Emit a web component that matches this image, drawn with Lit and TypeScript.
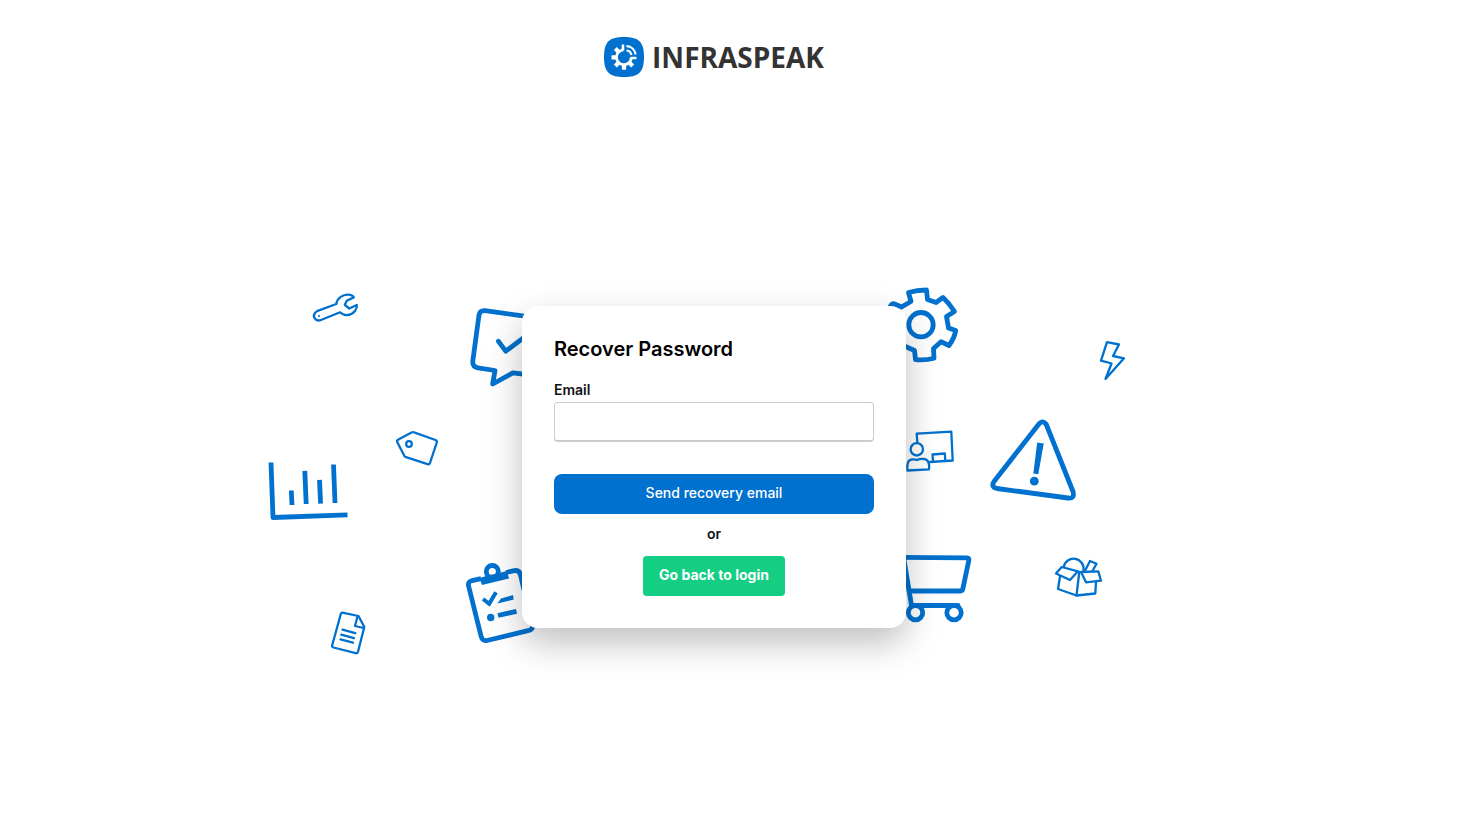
import { LitElement, html, css, svg } from "lit";
import { customElement } from "lit/decorators.js";

const wrench = svg`
  <g class="thin">
    <path d="M317 311.2 L336.3 304 C337 298 343 294 349 294.6 Q353 295.2 353.8 297.4 L346.8 300.800 L344.800 304.800 L349.3 308.5 L356.8 305 C357.5 309 353.5 314.5 348 315 Q343 315.5 340 312.3 L321 320 C316 322 312 317 315 313 Q315.8 311.7 317 311.2 Z"/>
    <circle class="fill" cx="319" cy="316" r="1.1"/>
  </g>`;

const chat = svg`
  <g class="thick">
    <path d="M530 316.8 L485 310.7 Q480 310.2 479 315 L472.8 361 Q472.3 367 478 367.8 L495 370.5 L492.7 384 L513 372.8 L530 375"/>
    <path d="M498.5 341.3 L505.7 351.2 L526 336"/>
  </g>`;

const tag = svg`
  <g class="thin">
    <path d="M398 439.8 L411.5 432.5 Q412.7 431.8 414 432.3 L435.5 440 Q437.2 440.8 436.8 442.3 L430 463 Q429.2 464.8 427.5 464.2 L406 457.2 Q405 457 404.3 455.8 L397.2 442 Q396.5 440.6 398 439.8 Z"/>
    <circle cx="409" cy="444" r="2.8"/>
  </g>`;

const chart = svg`
  <g class="thick">
    <path class="butt" d="M271 462.5 L273 517.5 L347.5 514.8"/>
    <path class="butt" d="M291.3 490.5 L292 505 M304.8 470.8 L306.2 504 M319.5 479.8 L320.6 503.7 M333.5 464.5 L335 503"/>
  </g>`;

const sheet = svg`
  <g class="thin">
    <path d="M343.5 612.8 L358.5 616 L364.3 627 L358 651.8 Q357.5 653.6 355.7 653.2 L333.5 647.5 Q331.8 647 332.2 645.2 L340.8 614 Q341.3 612.3 343.5 612.8 Z"/>
    <path d="M357.5 616.5 L355 626 L363.8 628"/>
    <path d="M342.5 629.7 L355.3 633.2 M341.3 634.6 L354 638.1 M340.5 639.3 L353 642.7"/>
  </g>`;

const clipboard = svg`
  <g class="thick">
    <path class="butt" d="M481 578.7 L472 580.7 Q467.5 581.8 468.6 586 L481 636 Q482.3 641.5 487 640.5 L528 630.7 Q534 629.5 532 624 L520.5 575 Q519.5 569.7 514.5 570.6 L506 572.5"/>
    <circle cx="492.3" cy="571.5" r="6"/>
    <path class="solid" d="M479.5 578 L488 575.5 L497 573.5 L507 571 L509 578.5 L482 585 Z"/>
    <path class="check" d="M483 599 L489.2 603.8 L496 592.3"/>
    <path class="solid" d="M497.3 603.5 L501 598.5 L513 595 L513.7 599.5 Z"/>
    <circle class="solid" cx="490.7" cy="617.5" r="3.7"/>
    <path class="butt" d="M498 615.5 L516.5 611.3"/>
  </g>`;

const gear = svg`
  <g class="thick">
    <path d="M890 307 Q891.5 303.5 894 303.8 L901.5 307 L911 301.5 L908.5 292.5 Q917 290 926.5 290 L927.5 299.5 L936 302.5 L943 297.5 Q949 303 954.5 311.5 L946.5 316.5 L948.5 328 L955.7 330.5 Q954.5 338 949 345.5 L941 341.8 L933.5 348.5 L934 358.3 Q926 360.5 915.5 359.7 L914.5 350.5 L902 345"/>
    <circle cx="921" cy="324.7" r="12.2"/>
  </g>`;

const bolt = svg`
  <path class="thin" d="M1107 342.2 L1119 344.5 L1113 356 L1124 358.3 L1105.5 379 L1111.5 363.5 L1101 360.7 Z"/>`;

const trainer = svg`
  <g class="thin">
    <path d="M917.3 442.5 L916.7 433.7 L951.3 431.7 L952.7 460.5 L930 462"/>
    <path d="M933 461.5 L932.5 454.5 L944.8 453.5 L945.3 460.5"/>
    <circle cx="916.8" cy="449.3" r="6.2"/>
    <path d="M907.5 470.5 Q906.3 461 911 459.7 Q914 459 917 460 Q920 458.3 924.5 459 Q930 460 929 469.3 Z"/>
  </g>`;

const warning = svg`
  <g class="thick">
    <path d="M1038.5 424.5 Q1042.5 419.3 1046.3 424.5 L1073 491.5 Q1075 499 1068 498 L997 488.5 Q990.5 487 994 481.5 Z"/>
    <path class="solid" d="M1037.2 442.4 L1043.7 443.6 L1038.3 474.2 L1033.3 473.4 Z"/>
    <circle class="solid" cx="1034.3" cy="481.2" r="4.4"/>
  </g>`;

const cart = svg`
  <g class="thick">
    <path d="M900 557.3 L967 557.8 Q969.5 558 968.8 560.5 L962.8 589 Q962.5 591 960.5 591 L909 591"/>
    <path d="M904 560 L911.5 605.5 L958 605.5"/>
    <circle cx="915.5" cy="612.7" r="7.2"/>
    <circle cx="954" cy="612.7" r="7.2"/>
  </g>`;

const box = svg`
  <g class="thin">
    <path d="M1061.7 567 L1078 571.3 L1070 580 L1056 573.5 Z"/>
    <path d="M1081 572 L1098.3 571.3 L1101 580.7 L1086 582.3 Z"/>
    <path d="M1060 576.5 L1058 589 L1076.5 595.5 L1095.3 593.5 L1096 581.7"/>
    <path d="M1079.3 572 L1076.5 595.5"/>
    <path d="M1063.7 567 A10 10 0 0 1 1083.5 570.500"/>
    <path d="M1085 570.7 L1090 561 L1096.5 563.8 L1092.5 571"/>
  </g>`;

@customElement("login-backdrop")
export class LoginBackdrop extends LitElement {
  static styles = css`
    :host {
      display: block;
    }
    .art {
      display: block;
      width: 900px;
      height: 380px;
    }
    .thin,
    .thick {
      fill: none;
      stroke: #0071ce;
      stroke-width: 2.3;
      stroke-linecap: round;
      stroke-linejoin: round;
    }
    .thick {
      stroke-width: 4.8;
    }
    .butt {
      stroke-linecap: butt;
    }
    .check {
      stroke-width: 4;
      stroke-linecap: butt;
      stroke-linejoin: miter;
    }
    .fill,
    .solid {
      fill: #0071ce;
      stroke: none;
    }
  `;

  render() {
    return html`
      <svg class="art" viewBox="264 277 900 380" aria-hidden="true">
        ${wrench}${chat}${tag}${chart}${sheet}${clipboard}
        ${gear}${bolt}${trainer}${warning}${cart}${box}
      </svg>
    `;
  }
}

@customElement("brand-logo")
export class BrandLogo extends LitElement {
  static styles = css`
    :host {
      display: flex;
      align-items: center;
      gap: 8px;
    }
    .mark {
      width: 40px;
      height: 40px;
    }
    .name {
      font: 700 28px/40px "Open Sans", sans-serif;
      color: #333;
    }
  `;

  render() {
    return html`
      <svg class="mark" viewBox="0 0 40 40" aria-hidden="true">
        <path fill="#0071ce" d="M20 0 C34 0 40 4 40 20 C40 36 34 40 20 40 C6 40 0 36 0 20 C0 4 6 0 20 0 Z"/>
        <g fill="none" stroke="#fff">
          <path stroke-width="2.8" d="M19.2 12.9 A7.4 7.4 0 1 0 27.3 20.3"/>
          <path stroke-width="4.2" d="M7.5 20.3 H12.5 M20 27.5 V32.7 M11.3 11.6 L14.8 15.1 M11.3 29 L14.8 25.5 M28.7 29 L25.2 25.5"/>
          <path stroke-width="2.6" d="M19 7.5 V13.5 M27 21 H32.5"/>
          <path stroke-width="2.2" d="M22.5 9.2 C27.5 9.5 31 13 31.5 17.5 M22.5 13.5 C25.3 13.8 27 15.5 27.5 18"/>
        </g>
      </svg>
      <span class="name">INFRASPEAK</span>
    `;
  }
}

@customElement("app-root")
export class AppRoot extends LitElement {
  static styles = css`
    :host {
      display: block;
      font-family: Inter, sans-serif;
      font-size: 14px;
      color: #111;
    }
    .page {
      display: flex;
      flex-direction: column;
      box-sizing: border-box;
      min-height: 100vh;
      padding-right: 51px;
      background: #fff;
      overflow: hidden;
    }
    .header {
      display: flex;
      justify-content: center;
      padding: 37px 0 17px;
    }
    .stage {
      display: grid;
      flex: 1;
      place-items: center;
      place-content: center;
    }
    .backdrop,
    .card {
      grid-area: 1 / 1;
    }
    .card {
      z-index: 1;
      display: flex;
      flex-direction: column;
      box-sizing: border-box;
      width: 384px;
      padding: 32px;
      border-radius: 16px;
      background: #fff;
      box-shadow: 0 15px 35px rgba(0, 0, 0, 0.25);
    }
    .title {
      margin: 0 0 20px;
      font-size: 20px;
      font-weight: 600;
      line-height: 22px;
      color: #000;
    }
    .label {
      margin-bottom: 2px;
      font-weight: 600;
      line-height: 20px;
    }
    .input {
      box-sizing: border-box;
      width: 100%;
      height: 40px;
      margin: 0 0 32px;
      padding: 0 12px;
      border: 1px solid #ccc;
      border-bottom-width: 2px;
      border-radius: 4px;
      background: #fff;
      font: inherit;
    }
    .send,
    .back {
      height: 40px;
      border: 0;
      color: #fff;
      font: 500 14px/38px Inter, sans-serif;
      text-align: center;
      text-decoration: none;
      cursor: pointer;
    }
    .send {
      padding: 0 16px 2px;
      border-radius: 8px;
      background: #0071ce;
    }
    .or {
      margin: 10px 0 12px;
      font-weight: 600;
      line-height: 20px;
      text-align: center;
    }
    .back {
      align-self: center;
      padding: 0 16px;
      border-radius: 4px;
      background: #13ce83;
      font-weight: 700;
    }
  `;

  private submit(event: Event) {
    event.preventDefault();
  }

  render() {
    return html`
      <div class="page">
        <header class="header"><brand-logo></brand-logo></header>
        <main class="stage">
          <login-backdrop class="backdrop"></login-backdrop>
          <form class="card" @submit=${this.submit}>
            <h1 class="title">Recover Password</h1>
            <label class="label" for="email">Email</label>
            <input class="input" id="email" type="email" name="email" />
            <button class="send" type="submit">Send recovery email</button>
            <p class="or">or</p>
            <a class="back" href="#login">Go back to login</a>
          </form>
        </main>
      </div>
    `;
  }
}
